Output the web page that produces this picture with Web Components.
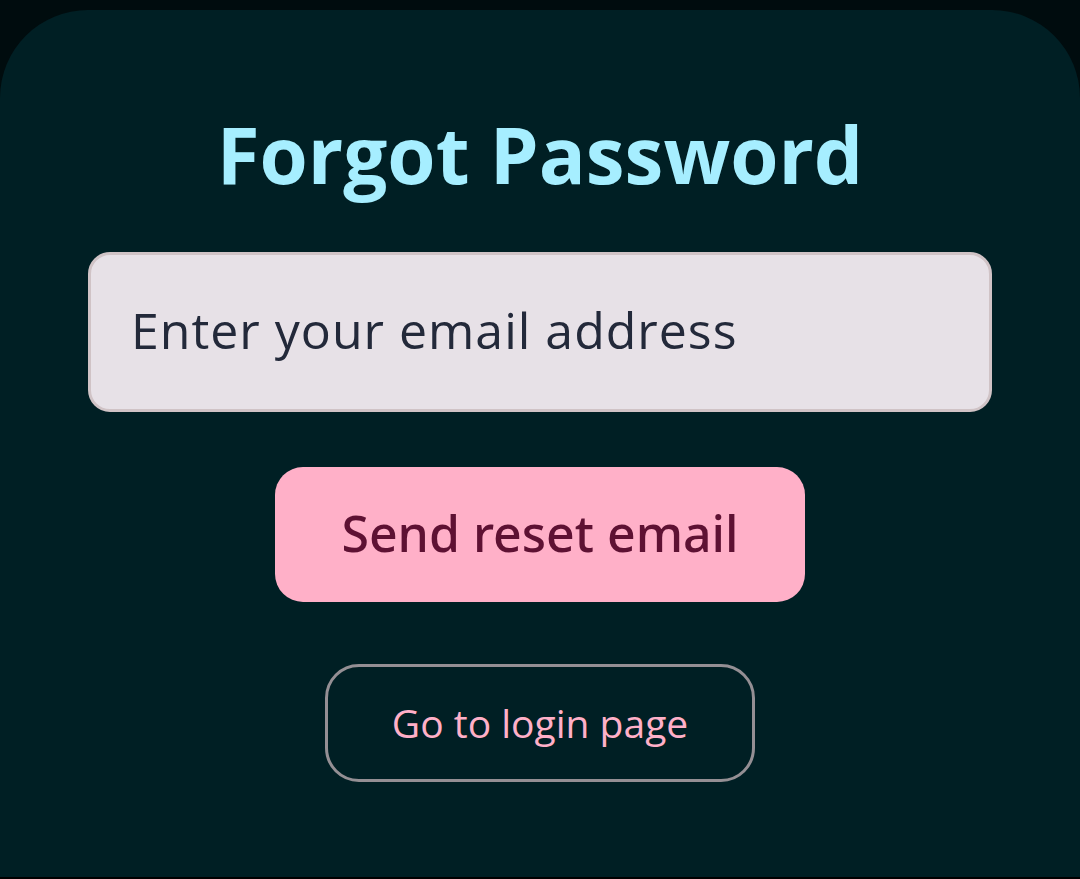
<!DOCTYPE html>
<html lang="en">
<head>
<meta charset="utf-8">
<meta name="viewport" content="width=device-width, initial-scale=1">
<title>Forgot Password</title>
<style>
body { margin: 0; background: #000c0e; font-family: "Open Sans", sans-serif; }
</style>
</head>
<body>
<bottom-sheet>
  <sheet-title>Forgot Password</sheet-title>
  <reset-form></reset-form>
</bottom-sheet>
<script>
class BottomSheet extends HTMLElement {
  constructor() {
    super();
    this.attachShadow({ mode: "open" }).innerHTML = `
      <style>
        :host { display: flex; flex-direction: column; min-height: 100vh; box-sizing: border-box; padding-top: 10px; border-bottom: 2px solid #000; }
        main { flex: 1; display: flex; flex-direction: column; gap: 46px; box-sizing: border-box; padding: 92px 88px 88px; border-radius: 88px 88px 0 0; background: #001f24; }
      </style>
      <main><slot></slot></main>`;
  }
}
class SheetTitle extends HTMLElement {
  constructor() {
    super();
    this.attachShadow({ mode: "open" }).innerHTML = `
      <style>
        :host { display: block; }
        h1 { margin: 0; text-align: center; font-size: 78px; line-height: 104px; font-weight: 700; color: #a6eeff; }
      </style>
      <h1><slot></slot></h1>`;
  }
}
class ResetForm extends HTMLElement {
  constructor() {
    super();
    this.attachShadow({ mode: "open" }).innerHTML = `
      <style>
        :host { display: block; }
        form { display: flex; flex-direction: column; align-items: center; margin: 0; }
        input, button, a { box-sizing: border-box; font-family: inherit; }
        input, button { font-size: 50px; }
        input { width: 100%; height: 160px; padding: 0 40px 4px; border: 3px solid #d0c3c6; border-radius: 22px; background: #e7e1e7; color: #23293a; letter-spacing: 1px; }
        input::placeholder { color: #23293a; opacity: 1; }
        button { margin-top: 55px; height: 135px; padding: 0 66px 4px; border: 0; border-radius: 28px; background: #ffb0c8; color: #5e1133; font-family: "Noto Sans", sans-serif; font-weight: 500; }
        a { display: flex; align-items: center; margin-top: 62px; height: 118px; padding: 0 64px 2px; border: 3px solid #948f94; border-radius: 34px; color: #ffb0c8; font-size: 39px; text-decoration: none; }
      </style>
      <form>
        <input type="email" aria-label="Email address" placeholder="Enter your email address">
        <button type="button">Send reset email</button>
        <a href="#login">Go to login page</a>
      </form>`;
  }
}
customElements.define("bottom-sheet", BottomSheet);
customElements.define("sheet-title", SheetTitle);
customElements.define("reset-form", ResetForm);
</script>
</body>
</html>
